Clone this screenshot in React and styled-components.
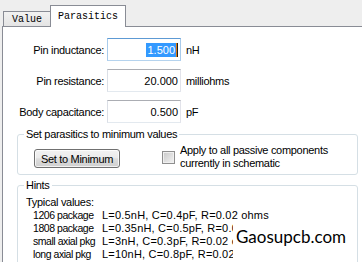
import React from 'react';
import styled, { createGlobalStyle } from 'styled-components';

const Global = createGlobalStyle`
  html, body { margin: 0; padding: 0; }
  body {
    width: 362px; height: 262px; overflow: hidden;
    background: #EEEEEE;
    font-family: "Liberation Sans", Arial, sans-serif;
    font-size: 11px; color: #000;
    letter-spacing: -0.3px;
  }
`;

const Window = styled.div`
  position: relative;
  width: 362px;
  height: 262px;
  overflow: hidden;
  display: flex;
  flex-direction: column;
`;

const TabStrip = styled.div`
  flex: none;
  height: 26px;
  display: flex;
  align-items: flex-end;
  padding-left: 3px;
`;

const Tab = styled.div`
  position: relative;
  z-index: 1;
  box-sizing: border-box;
  display: flex;
  align-items: center;
  justify-content: center;
  font-family: "Liberation Mono", "Courier New", monospace;
  font-size: 10px;
  letter-spacing: 0;
  border: 1px solid #898C95;
  border-bottom: none;
  width: ${p => p.$w}px;
  height: ${p => (p.$active ? 22 : 15)}px;
  margin-bottom: ${p => (p.$active ? -1 : 0)}px;
  margin-left: ${p => (p.$first ? 0 : -1)}px;
  background: ${p => (p.$active ? '#FFFFFF' : 'linear-gradient(#F2F2F2, #E4E4E4)')};
  padding-top: ${p => (p.$active ? 0 : 1)}px;
`;

const Panel = styled.div`
  flex: 1;
  margin-left: 2px;
  border-left: 1px solid #898C95;
  border-top: 1px solid #898C95;
  background: #FFFFFF;
  display: flex;
  flex-direction: column;
`;

const Form = styled.div`
  display: grid;
  grid-template-columns: 101px 74px 1fr;
  column-gap: 3px;
  row-gap: 8px;
  padding-top: 11px;
  align-items: center;
`;

const Label = styled.div`
  text-align: right;
  white-space: nowrap;
`;

const Field = styled.div`
  box-sizing: border-box;
  height: 23px;
  border: 1px solid;
  border-color: ${p => (p.$focused ? '#5D9AD4 #A9CBEB #B5D3EE #A9CBEB' : '#ABADB3 #E2E3EA #E3E9EF #DBDFE6')};
  display: flex;
  align-items: center;
  justify-content: flex-end;
  padding-right: 2px;
  white-space: nowrap;
  letter-spacing: 0;
`;

const Selected = styled.span`
  display: inline-block;
  background: #3399FF;
  color: #FFFFFF;
  line-height: 14px;
  padding: 0 1px;
`;

const Caret = styled.span`
  display: inline-block;
  width: 2px;
  height: 14px;
  background: linear-gradient(90deg, #E07A10 50%, #202020 50%);
`;

const Unit = styled.div`
  margin-left: 2px;
  white-space: nowrap;
`;

const Group = styled.fieldset`
  box-sizing: border-box;
  width: 341px;
  min-width: 0;
  margin: ${p => p.$mt}px 0 0 14px;
  border: 1px solid #D5DFE5;
  border-radius: 3px;
  padding: ${p => p.$pt}px 8px ${p => p.$pb}px 8px;
`;

const Legend = styled.legend`
  padding: 0 2px;
  margin-left: -2px;
  line-height: 13px;
  font-size: 11px;
`;

const ActionRow = styled.div`
  display: flex;
  align-items: flex-start;
`;

const Button = styled.button`
  box-sizing: border-box;
  width: 86px;
  height: 19px;
  margin: 5px 0 0 8px;
  padding: 0;
  border: 1px solid #707070;
  border-radius: 3px;
  background: linear-gradient(#F2F2F2 0%, #EBEBEB 45%, #DDDDDD 52%, #CFCFCF 100%);
  box-shadow: inset 0 0 0 1px rgba(255, 255, 255, 0.75);
  font: 11px "Liberation Sans", Arial, sans-serif;
  letter-spacing: -0.3px;
  color: #000;
`;

const CheckBox = styled.span`
  box-sizing: border-box;
  flex: none;
  width: 13px;
  height: 13px;
  margin: 7px 0 0 42px;
  border: 1px solid #8F8F8F;
  background: linear-gradient(135deg, #C9C9C9, #F3F3F3);
  box-shadow: inset 0 0 0 1px #F0F0F0;
`;

const CheckLabel = styled.div`
  margin-left: 5px;
  line-height: 13px;
  white-space: nowrap;
`;

const HintTitle = styled.div`
  line-height: 13px;
  white-space: nowrap;
`;

const HintTable = styled.div`
  display: grid;
  grid-template-columns: 69px auto;
  padding-left: 7px;
  line-height: 13px;
  white-space: nowrap;
`;

const HintName = styled.span`
  font-size: 10.5px;
  letter-spacing: -0.45px;
`;

const HintValue = styled.span`
  letter-spacing: 0.2px;
`;

const Watermark = styled.div`
  position: absolute;
  left: 233px;
  top: 219px;
  width: 122px;
  height: 43px;
  box-sizing: border-box;
  padding-left: 3px;
  padding-bottom: 9px;
  background: #FFFFFF;
  display: flex;
  align-items: center;
  font-family: Lato, "Open Sans", sans-serif;
  font-size: 17px;
  letter-spacing: 0;
  color: #000;
`;

const rows = [
  { label: 'Pin inductance:', value: '1.500', unit: 'nH', focused: true },
  { label: 'Pin resistance:', value: '20.000', unit: 'milliohms' },
  { label: 'Body capacitance:', value: '0.500', unit: 'pF' },
];

const hints = [
  ['1206 package', 'L=0.5nH, C=0.4pF, R=0.02 ohms'],
  ['1808 package', 'L=0.35nH, C=0.5pF, R=0.02 ohms'],
  ['small axial pkg', 'L=3nH, C=0.3pF, R=0.02 ohms'],
  ['long axial pkg', 'L=10nH, C=0.8pF, R=0.02 ohms'],
];

export default function App() {
  return (
    <Window>
      <Global />
      <TabStrip>
        <Tab $first $w={48}>Value</Tab>
        <Tab $active $w={76}>Parasitics</Tab>
      </TabStrip>
      <Panel>
        <Form>
          {rows.map(r => (
            <React.Fragment key={r.label}>
              <Label>{r.label}</Label>
              <Field $focused={r.focused}>
                {r.focused ? (
                  <>
                    <Selected>{r.value}</Selected>
                    <Caret />
                  </>
                ) : (
                  r.value
                )}
              </Field>
              <Unit>{r.unit}</Unit>
            </React.Fragment>
          ))}
        </Form>
        <Group $mt={5} $pt={3} $pb={4}>
          <Legend>Set parasitics to minimum values</Legend>
          <ActionRow>
            <Button type="button">Set to Minimum</Button>
            <CheckBox />
            <CheckLabel>
              Apply to all passive components
              <br />
              currently in schematic
            </CheckLabel>
          </ActionRow>
        </Group>
        <Group $mt={4} $pt={4} $pb={10}>
          <Legend>Hints</Legend>
          <HintTitle>Typical values:</HintTitle>
          <HintTable>
            {hints.map(([k, v]) => (
              <React.Fragment key={k}>
                <HintName>{k}</HintName>
                <HintValue>{v}</HintValue>
              </React.Fragment>
            ))}
          </HintTable>
        </Group>
      </Panel>
      <Watermark>Gaosupcb.com</Watermark>
    </Window>
  );
}
